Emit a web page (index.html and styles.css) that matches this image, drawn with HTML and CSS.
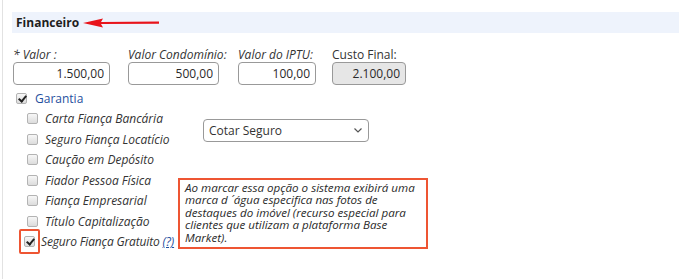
FILE: index.html
```html
<!DOCTYPE html>
<html>
	<head>
		<meta charset="utf-8">
		<title>Financeiro</title>
		<link rel="stylesheet" href="styles.css">
	</head>
	<body>
		<div id="page">
			<div class="titulo">
				<span>Financeiro</span>
				<svg class="seta" width="76" height="10" viewBox="0 0 76 10">
					<path d="M0 5 L20 0.5 L18 4 L76 3.5 L76 5.8 L18 6 L20 9.5 Z" fill="#e8141b"/>
				</svg>
			</div>

			<div class="valores">
				<div class="campo c1">
					<label>* Valor :</label>
					<input type="text" value="1.500,00">
				</div>
				<div class="campo c2">
					<label>Valor Condomínio:</label>
					<input type="text" value="500,00">
				</div>
				<div class="campo c3">
					<label>Valor do IPTU:</label>
					<input type="text" value="100,00">
				</div>
				<div class="campo c4">
					<label class="reto">Custo Final:</label>
					<input type="text" value="2.100,00" class="bloq" readonly>
				</div>
			</div>

			<div class="garantia">
				<div class="lista">
					<div class="item topo"><span class="chk on"></span><span class="azul">Garantia</span></div>
					<div class="item"><span class="chk"></span>Carta Fiança Bancária</div>
					<div class="item"><span class="chk"></span>Seguro Fiança Locatício</div>
					<div class="item"><span class="chk"></span>Caução em Depósito</div>
					<div class="item"><span class="chk"></span>Fiador Pessoa Física</div>
					<div class="item"><span class="chk"></span>Fiança Empresarial</div>
					<div class="item"><span class="chk"></span>Título Capitalização</div>
					<div class="item ultimo"><span class="marca"><span class="chk on"></span></span>Seguro Fiança Gratuito <a href="javascript:;">(?)</a></div>
				</div>
				<div class="lado">
					<div class="select">
						<span>Cotar Seguro</span>
						<svg width="8" height="5" viewBox="0 0 8 5"><path d="M0.5 0.5 L4 4 L7.5 0.5" fill="none" stroke="#555" stroke-width="1.2"/></svg>
					</div>
					<div class="aviso">Ao marcar essa opção o sistema exibirá uma marca d ´ água especifica nas fotos de destaques do imóvel (recurso especial para clientes que utilizam a plataforma Base Market).</div>
				</div>
			</div>
		</div>
	</body>
</html>
```

FILE: styles.css
```css
* {
	margin: 0;
	padding: 0;
	box-sizing: border-box;
}

body {
	font-family: "Open Sans", sans-serif;
	font-size: 12px;
	color: #2a2a2a;
	background: #fff;
}

#page {
	width: 680px;
	height: 279px;
	border-left: 1px solid #e2e2e2;
	margin-left: 2px;
	padding: 12px 3px 0 9px;
}

.titulo {
	height: 21px;
	background-color: #eef3fc;
	display: flex;
	align-items: center;
	padding-left: 4px;
	font-weight: bold;
	color: #1e1e1e;
}
.titulo span {
	width: 67px;
}
.seta {
	display: block;
}

.valores {
	display: flex;
	margin-top: 15px;
}
.campo {
	flex: none;
}
.campo label {
	display: block;
	font-style: italic;
	color: #333;
	height: 13px;
	line-height: 13px;
	white-space: nowrap;
}
.campo label.reto {
	font-style: normal;
}
.campo input {
	display: block;
	height: 23px;
	margin-top: 1px;
	border: 1px solid #999;
	border-radius: 4px;
	text-align: right;
	padding-right: 5px;
	font-family: inherit;
	font-size: 12px;
	color: #2a2a2a;
	background: #fff;
}
.c1 { width: 115px; margin-left: 1px; }
.c1 input { width: 97px; }
.c2 { width: 110px; }
.c2 input { width: 91px; }
.c3 { width: 94px; }
.c3 input { width: 78px; }
.c4 input { width: 74px; }
.campo input.bloq {
	background-color: #e6e6e6;
}

.garantia {
	display: flex;
	margin-top: 3px;
}
.lista {
	width: 166px;
	flex: none;
}
.item {
	display: flex;
	align-items: center;
	height: 20.5px;
	padding-left: 15px;
	font-style: italic;
	color: #333;
	white-space: nowrap;
}
.item .chk {
	margin-right: 7px;
}
.item.topo {
	padding-left: 4px;
	font-style: normal;
}
.item.topo .chk {
	margin-right: 8px;
}
.azul {
	color: #1f4f9e;
}
.chk {
	display: inline-block;
	width: 11px;
	height: 11px;
	border: 1px solid #b3b3b3;
	border-radius: 2px;
	background: linear-gradient(#f7f7f7, #dcdcdc);
	position: relative;
	flex: none;
}
.chk.on::after {
	content: "";
	position: absolute;
	left: 3px;
	top: 0px;
	width: 3px;
	height: 6px;
	border: solid #222;
	border-width: 0 2px 2px 0;
	transform: rotate(40deg);
}
.item.ultimo {
	padding-left: 7px;
	letter-spacing: -0.15px;
	position: relative;
	z-index: 1;
}
.marca {
	display: flex;
	align-items: center;
	justify-content: center;
	flex: none;
	width: 21px;
	height: 25px;
	margin-right: 1px;
	border: 2px solid #ee5533;
	border-radius: 2px;
}
.item .marca .chk {
	margin-right: 0;
}
.item a {
	color: #1f4f9e;
	margin-left: 3px;
	text-decoration: underline;
}

.lado {
	padding-top: 31px;
}
.select {
	width: 166px;
	height: 23px;
	margin-left: 25px;
	border: 1px solid #999;
	border-radius: 4px;
	display: flex;
	align-items: center;
	justify-content: space-between;
	padding: 0 6px 0 5px;
	font-family: "Open Sans", sans-serif;
	font-size: 12px;
	color: #333;
}
.aviso {
	width: 250px;
	margin-top: 36px;
	border: 2px solid #ee5533;
	padding: 2px 4px 3px 5px;
	font-style: italic;
	color: #2a2a2a;
	font-size: 11.6px;
	line-height: 12.4px;
}
```
